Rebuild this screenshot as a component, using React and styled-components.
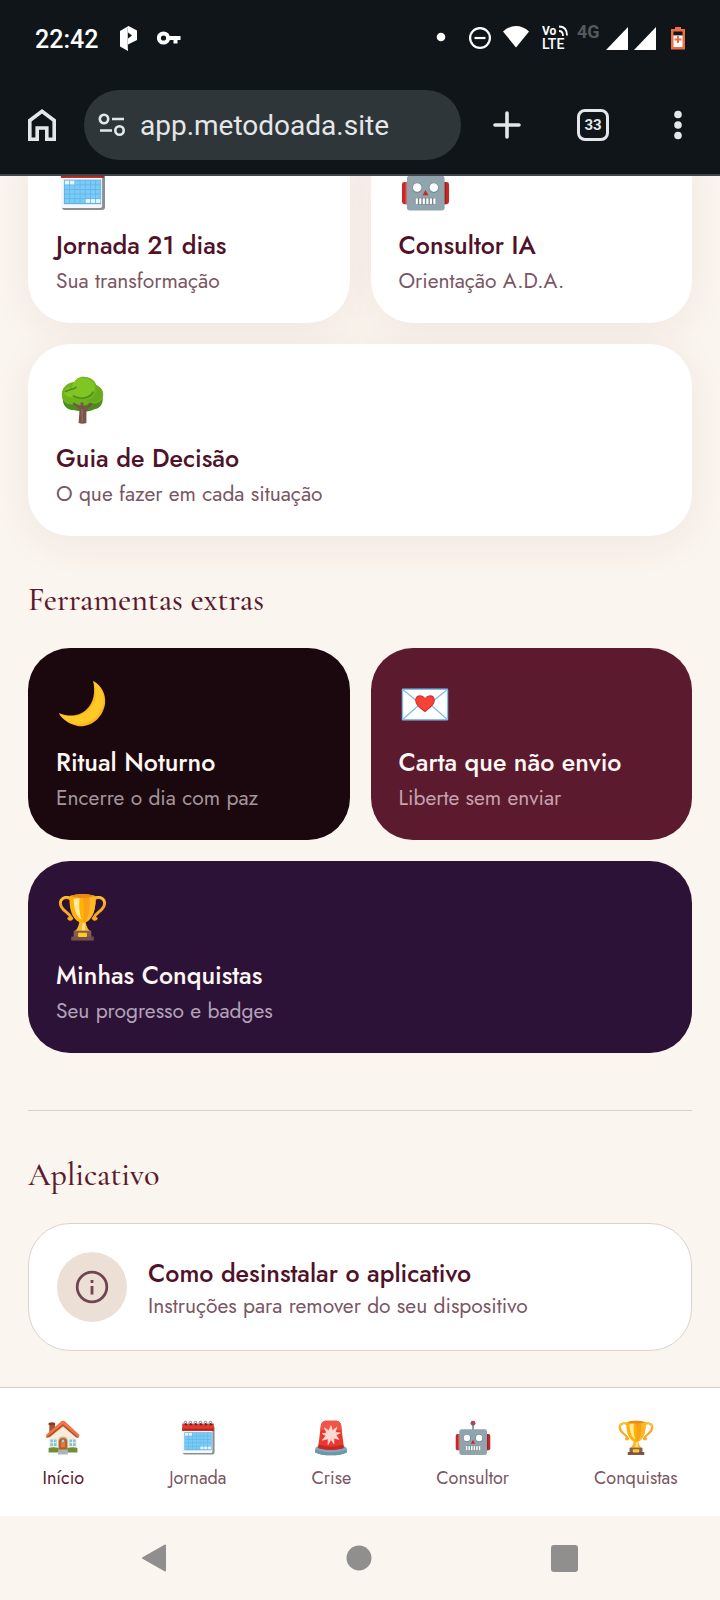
import React from "react";
import styled, { createGlobalStyle } from "styled-components";

const GlobalStyle = createGlobalStyle`
  * { box-sizing: border-box; }
  body {
    margin: 0;
    background: #faf5ee;
    font-family: Jost, Lato, "Open Sans", sans-serif;
    color: #4f1228;
  }
  button { border: 0; background: none; padding: 0; margin: 0; font: inherit; color: inherit; cursor: pointer; }
  svg { display: block; flex: none; }
`;

const Screen = styled.div`
  display: flex;
  flex-direction: column;
  min-height: 100vh;
`;

/* ---------- phone status bar and browser toolbar ---------- */

const Chrome = styled.header`
  background: #0f1519;
  border-bottom: 2px solid #414549;
  color: #e4e7e9;
  font-family: Roboto, sans-serif;
  padding-bottom: 14px;
`;

const StatusBar = styled.div`
  display: flex;
  align-items: center;
  justify-content: space-between;
  height: 90px;
  padding: 0 34px 14px 35px;
  color: #fff;
`;

const StatusGroup = styled.div`
  display: flex;
  align-items: center;
  gap: ${(p) => p.$gap}px;
`;

const Clock = styled.time`
  padding-top: 3px;
  font-size: 25px;
  line-height: 28px;
  font-weight: 500;
`;

const NetworkType = styled.span`
  width: 23px;
  padding-bottom: 12px;
  font-size: 18px;
  line-height: 18px;
  font-weight: 700;
  color: #55595c;
`;

const Toolbar = styled.div`
  display: flex;
  align-items: center;
  height: 70px;
`;

const ToolButton = styled.button`
  display: flex;
  align-items: center;
  justify-content: center;
  flex: none;
  width: ${(p) => p.$width}px;
  height: 70px;
`;

const AddressBar = styled.label`
  display: flex;
  align-items: center;
  gap: 14px;
  flex: 1;
  min-width: 0;
  height: 70px;
  margin-right: 3px;
  padding: 0 20px 0 14px;
  border-radius: 35px;
  background: #2f3639;
`;

const AddressInput = styled.input`
  flex: 1;
  min-width: 0;
  border: 0;
  padding: 2px 0 0;
  background: none;
  outline: none;
  color: #e4e7e9;
  font: 400 28px/36px Roboto, sans-serif;
`;

const TabCount = styled.span`
  display: flex;
  align-items: center;
  justify-content: center;
  width: 32px;
  height: 32px;
  border: 3px solid #e4e7e9;
  border-radius: 8px;
  font-size: 15px;
  line-height: 18px;
  font-weight: 700;
`;

/* ---------- page ---------- */

const Viewport = styled.main`
  flex: 1;
  overflow: hidden;
  padding: 0 28px 36px;
`;

const Scrolled = styled.div`
  margin-top: -45px;
`;

const Grid = styled.div`
  display: grid;
  grid-template-columns: 1fr 1fr;
  gap: 21px;
`;

const tones = {
  light: { bg: "#ffffff", title: "#4f1228", text: "#7a5663", shadow: "0 8px 40px rgba(130, 40, 55, 0.07)" },
  night: { bg: "#1a080e", title: "#fff7f4", text: "#a5959b", shadow: "none" },
  wine: { bg: "#5b1a2e", title: "#fff7f4", text: "#c6a3ae", shadow: "none" },
  purple: { bg: "#2d1238", title: "#fff7f4", text: "#b3a2b8", shadow: "none" },
};

const Card = styled.button`
  display: flex;
  flex-direction: column;
  align-items: flex-start;
  grid-column: ${(p) => (p.$wide ? "1 / -1" : "auto")};
  padding: 28px 28px 29px;
  border-radius: 42px;
  text-align: left;
  background: ${(p) => tones[p.$tone].bg};
  box-shadow: ${(p) => tones[p.$tone].shadow};
`;

const CardIcon = styled.span`
  display: flex;
  align-items: center;
  height: 56px;
  margin-bottom: 13px;
  padding-left: 2px;
`;

const CardCopy = styled.span`
  display: flex;
  flex-direction: column;
  gap: ${(p) => p.$gap}px;
`;

const CardTitle = styled.span`
  font-size: 25px;
  line-height: 34px;
  font-weight: 500;
  color: ${(p) => tones[p.$tone].title};
`;

const CardText = styled.span`
  font-size: 21px;
  line-height: 26px;
  color: ${(p) => tones[p.$tone].text};
`;

const SectionTitle = styled.h2`
  margin: 44px 0 28px;
  font: 500 32px/40px "Cormorant Garamond", "Liberation Serif", serif;
  color: #5b1a2e;
`;

const Divider = styled.hr`
  margin: 57px 0 0;
  border: 0;
  border-top: 1px solid #d8d1cc;
`;

const InfoCard = styled.button`
  display: flex;
  align-items: center;
  gap: 21px;
  width: 100%;
  padding: 28px;
  border: 1px solid #ddd3cc;
  border-radius: 42px;
  background: #fff;
  text-align: left;
`;

const InfoBadge = styled.span`
  display: flex;
  align-items: center;
  justify-content: center;
  flex: none;
  width: 70px;
  height: 70px;
  border-radius: 50%;
  background: #ecdfd5;
`;

/* ---------- bottom bars ---------- */

const BottomNav = styled.nav`
  display: flex;
  justify-content: space-around;
  padding: 28px 0 25px;
  border-top: 1px solid #dccfc8;
  background: #fff;
`;

const NavLink = styled.a`
  display: flex;
  flex-direction: column;
  align-items: center;
  gap: 9px;
  padding-top: 4px;
  font-size: 18px;
  line-height: 26px;
  text-decoration: none;
  color: ${(p) => (p.$active ? "#5b1a2e" : "#7a5663")};
`;

const SystemBar = styled.footer`
  display: flex;
  height: 84px;
  padding: 0 53px 0 51px;
`;

const SystemButton = styled.button`
  display: flex;
  align-items: center;
  justify-content: center;
  flex: 1;
`;

/* ---------- emoji drawings, all on a 50-unit square ---------- */

function Emoji({ size = 49, children }) {
  return (
    <svg width={size} height={size} viewBox="-1 -1 50 50" aria-hidden="true">
      {children}
    </svg>
  );
}

function Calendar({ size }) {
  const cells = [];
  for (let r = 0; r < 5; r++) {
    for (let c = 0; c < 7; c++) {
      const blank = (r === 0 && c < 2) || (r === 4 && c > 3);
      cells.push(
        <rect key={`${r}-${c}`} x={6 + c * 5.3} y={17 + r * 4.7} width="4.5" height="3.9" fill={blank ? "#e6f5fd" : "#7ccbf6"} />
      );
    }
  }
  return (
    <Emoji size={size}>
      <path d="M3 8h44v36a3 3 0 0 1-3 3H5a3 3 0 0 1-2-3z" fill="#8b8f93" />
      <path d="M2 8h42v35a2 2 0 0 1-2 2H4a2 2 0 0 1-2-2z" fill="#f5f7f9" />
      <rect x="5" y="16" width="38" height="25" fill="#5fb4e8" />
      {cells}
      <path d="M2 4h44v10H2z" fill="#e0392f" />
      <path d="M2 11h44v3H2z" fill="#b9251e" />
      {[6, 13, 20, 27, 34, 41].map((x) => (
        <g key={x}>
          <circle cx={x + 1} cy="5" r="1.8" fill="#8c1b17" />
          <path d={`M${x - 1} 5c-2-5 4-6 3-1`} fill="none" stroke="#8da3af" strokeWidth="1.6" />
        </g>
      ))}
    </Emoji>
  );
}

function Robot({ size }) {
  return (
    <Emoji size={size}>
      <path d="M24 4v9" stroke="#78909c" strokeWidth="2.4" />
      <circle cx="24" cy="3.4" r="3.4" fill="#a4485a" />
      <rect x="0" y="18.500" width="9" height="22.500" rx="2.500" fill="#c62828" />
      <rect x="39" y="18.500" width="9" height="22.500" rx="2.500" fill="#c62828" />
      <rect x="3.500" y="18.500" width="2" height="22.500" fill="#e05a55" />
      <rect x="43" y="18.500" width="2" height="22.500" fill="#a31c1c" />
      <rect x="5" y="12" width="38.500" height="35.500" rx="3" fill="#90a4ae" />
      <circle cx="15.500" cy="24.300" r="5.200" fill="#6f8792" />
      <circle cx="32.500" cy="24.300" r="5.200" fill="#6f8792" />
      <circle cx="15.500" cy="24" r="4.400" fill="#fff" />
      <circle cx="32.500" cy="24" r="4.400" fill="#fff" />
      <path d="M24 26.500l3 5.500h-6z" fill="#c62828" />
      <rect x="13" y="34.500" width="22" height="7" rx="3" fill="#78868d" />
      {[14, 17.600, 21.200, 24.800, 28.400, 32].map((x) => (
        <rect key={x} x={x} y="35" width="2.200" height="6" rx="0.800" fill="#fff" />
      ))}
    </Emoji>
  );
}

function Tree() {
  return (
    <Emoji>
      <path d="M4 20c-1 8 3 14 12 14 7 2 15 2 20-1 7-1 10-7 8-14z" fill="#4c8c1f" />
      <path d="M20 47l1-14-7-7 2-1 7 5 1-5h3l0 7 6-7 2 1-7 9 0 12q-4 1.500-8 0z" fill="#795548" />
      <path d="M16 5C9 5 2 11 3 19c0 8 9 11 14 8 5 3 11 3 14-1 6 3 13 0 14-6 1-7-3-10-7-12C35-2 19-3 16 5z" fill="#6fb41f" />
      <path d="M38 9c2 8-3 14-10 15 7 4 15 1 16-5 1-5-2-8-6-10z" fill="#68ab1e" />
      <path d="M13 13c0-8 6-13 13-12 8 1 12 7 10 13-2 7-10 9-17 6-5 2-13 0-14-4 1-4 3-5 6-6 0 1 1 2 2 3z" fill="#80c522" />
      <path d="M6 15l5-2 4-1 3-2M14 19c6 4 17 4 21-4" fill="none" stroke="#4c8c1f" strokeWidth="1.600" />
      <path d="M22 34V26h3v8zM25 33l7-6 1 1-7 8zM14 27l1-1 7 5v3z" fill="#795548" />
      <path d="M23.500 33l.5 13" stroke="#936a5b" strokeWidth="1.500" />
    </Emoji>
  );
}

function Moon() {
  return (
    <Emoji>
      <path d="M35 0C44 5 48 14 47 23 45 38 32 48 19 46 10 44 3 39 0 33c10 4 21 3 28-4 8-7 9-18 7-29z" fill="#fcb61c" />
      <path d="M35 0C43 6 46 13 45.500 21 44 35 31 45 18 44 9 43 3 38 0 33c10 5 23 4 31-4 8-8 8-19 4-29z" fill="#ffca28" />
    </Emoji>
  );
}

function LoveLetter() {
  return (
    <Emoji>
      <rect x="0.500" y="8.500" width="46" height="31" rx="0.500" fill="#fff" stroke="#82bdea" strokeWidth="1.400" />
      <path d="M1 39l17-15M46 39L29 24M1 9l20 16q2.500 2 5 0L46 9" fill="none" stroke="#82bdea" strokeWidth="1.300" />
      <path d="M23.500 32C18 28 13 24 13.500 19c.5-5 7-6 10-1.500C27 13 33 14 33.500 19c.5 5-5 9-10 13z" fill="#d32f2f" />
      <path d="M23.500 30.500C18 26.500 14 23 14.300 19c.7-4 6.700-5 9.200-.500 2.500-4.500 8-3.500 9 .5.500 4-4 7.500-9 11.500z" fill="#f44336" />
    </Emoji>
  );
}

function Trophy({ size }) {
  return (
    <Emoji size={size}>
      <path d="M12 5C7 2 1 4 1.500 10 2 17 10 18 13 25c-1 1-2 1-3 0M36 5c5-3 11-1 10.500 5C46 17 38 18 35 25c1 1 2 1 3 0" fill="none" stroke="#f9a825" strokeWidth="3" strokeLinecap="round" />
      <path d="M12 4C7 1 2 4 2 9M36 4c5-3 10 0 10 5" fill="none" stroke="#ffca28" strokeWidth="1.400" />
      <path d="M21 27h6l1 5q1 4 4 6H16q3-2 4-6z" fill="#f9b62b" />
      <path d="M24 28h2l1 9h-4z" fill="#ffe082" />
      <path d="M11 2q13-4 26 0c1 9-1 19-6 24-3 4-11 4-14 0-5-5-7-15-6-24z" fill="#ffb300" />
      <path d="M24 1q7 0 13 1c1 9-1 19-6 24-1.500 2-4 3-7 3 3-7 1-18 0-28z" fill="#f9a01b" />
      <path d="M31 2q3 0 6 0c1 9-1 19-6 24-1 1-2 2-4 2.500 4-6 5-17 4-26.500z" fill="#ffb726" />
      <path d="M15 5q4-1 6-1c-1 9 0 16 2 22-6-3-8-13-8-21z" fill="#ffe9a0" />
      <path d="M11 2q13-4 26 0-13 4-26 0z" fill="#e98b15" />
      <path d="M15 37.500h18v7H15z" fill="#86604f" />
      <path d="M12.500 43.500h23v4h-23z" fill="#74504a" />
      <rect x="19.500" y="39.500" width="9" height="4.500" rx="0.800" fill="#ffca28" />
    </Emoji>
  );
}

function House({ size }) {
  return (
    <Emoji size={size}>
      <path d="M5 4q4-2 8 0v14H5z" fill="#a9512f" />
      <path d="M4 3q5-2 9 0v3H4z" fill="#7b3f2a" />
      <path d="M5 20L24 5l19 15v23H5z" fill="#f5eddc" />
      <path d="M5 20L24 5l19 15v4L24 9 5 24z" fill="#d9cdb8" />
      <path d="M24 0q2 0 4 2l19 18-1.500 4q-2 0-4-2L24 7 6 22q-3 2-6 1l1-4L20 2q2-2 4-2z" fill="#ed7546" />
      <path d="M24 5l21 18q-2 1-4-1L24 7.500 6 22q-3 2-5 1z" fill="#b84a24" />
      <path d="M17 41V28q1-6 7-6t7 6v13z" fill="#c9b696" />
      <path d="M18.500 41V28q1-4 5.500-4t5.500 4v13z" fill="#b85b2b" />
      <path d="M21 29h6v8h-6z" fill="#db7a42" />
      <circle cx="24" cy="28" r="2" fill="#9fd4e6" />
      <path d="M6.500 26h8.500v9H6.500zM33 26h8.500v9H33z" fill="#7fc4dc" />
      <path d="M6.500 30.500H15M10.700 26v9M33 30.500h8.500M37.200 26v9" stroke="#fff" strokeWidth="1.100" />
      <path d="M4 38q6-2 14 0v6H4zM30 38q8-2 14 0v6H30z" fill="#6f8f35" />
      <path d="M18 40h12l1 7H17z" fill="#aab4ba" />
    </Emoji>
  );
}

function Siren({ size }) {
  return (
    <Emoji size={size}>
      <path d="M2 40q0-4 5-5h34q5 1 5 5v4q-8 4-22 4T2 44z" fill="#82a8b8" />
      <path d="M2 40q10 4 22 4t22-4v4q-8 4-22 4T2 44z" fill="#6d96a8" />
      <path d="M10 6q1-5 6-6h16q5 1 6 6l4 32q-6 2.500-18 2.500T6 38z" fill="#e8382f" />
      <path d="M10 6q1-5 6-6h16q5 1 6 6l1 7H9z" fill="#f05545" />
      <path d="M7 33q16 6 34 0l.7 5q-6 2.500-18 2.500T6 38z" fill="#c62828" />
      <path d="M24 7l2 7 6-5-2 7 7 1-6 3 4 6-7-2 0 8-4-6-4 7 0-8-8 2 5-6-5-3 6-1-3-7 6 4z" fill="#ffd9d2" stroke="#ffd9d2" strokeLinejoin="round" />
    </Emoji>
  );
}

/* ---------- line icons ---------- */

const Key = () => (
  <svg width="24" height="14" viewBox="0 0 24 14" fill="none" aria-hidden="true">
    <circle cx="6.500" cy="7" r="4.600" stroke="#fff" strokeWidth="4" />
    <path d="M10 7h13.500M18.500 7v5.500" stroke="#fff" strokeWidth="4" />
  </svg>
);

const PMark = () => (
  <svg width="19" height="25" viewBox="-2 0 19 25" aria-hidden="true">
    <path d="M0 5L8.500 0l8.500 4.500V14l-9 4.500V25L0 20.500z" fill="#fff" />
    <path d="M8 6.500l4 3-4 3z" fill="#0f1519" />
    <path d="M7.500 2v21" stroke="#b9bdc0" strokeWidth="0.800" />
  </svg>
);

const Signal = () => (
  <svg width="22" height="23" viewBox="0 0 22 23" aria-hidden="true">
    <path d="M22 0v23H0z" fill="#fff" />
  </svg>
);

const VoLte = () => (
  <svg width="29" height="34" viewBox="0 -4 29 34" fill="none" aria-hidden="true">
    <text x="0" y="10" fill="#fff" fontFamily="Roboto, sans-serif" fontWeight="700" fontSize="12">Vo</text>
    <text x="0" y="24" fill="#fff" fontFamily="Roboto, sans-serif" fontWeight="500" fontSize="14">LTE</text>
    <path d="M17 1.500q8 0 8 9M17 6q4 0 4 5" stroke="#fff" strokeWidth="1.800" />
  </svg>
);

const launchCards = [
  { title: "Jornada 21 dias", text: "Sua transformação", icon: Calendar, tone: "light" },
  { title: "Consultor IA", text: "Orientação A.D.A.", icon: Robot, tone: "light" },
  { title: "Guia de Decisão", text: "O que fazer em cada situação", icon: Tree, tone: "light", wide: true },
];

const extraCards = [
  { title: "Ritual Noturno", text: "Encerre o dia com paz", icon: Moon, tone: "night" },
  { title: "Carta que não envio", text: "Liberte sem enviar", icon: LoveLetter, tone: "wine" },
  { title: "Minhas Conquistas", text: "Seu progresso e badges", icon: Trophy, tone: "purple", wide: true },
];

const navItems = [
  { label: "Início", icon: House, active: true },
  { label: "Jornada", icon: Calendar },
  { label: "Crise", icon: Siren },
  { label: "Consultor", icon: Robot },
  { label: "Conquistas", icon: Trophy },
];

function CardGrid({ cards }) {
  return (
    <Grid>
      {cards.map(({ title, text, icon: Icon, tone, wide }) => (
        <Card key={title} type="button" $tone={tone} $wide={wide}>
          <CardIcon><Icon /></CardIcon>
          <CardCopy $gap={6}>
            <CardTitle $tone={tone}>{title}</CardTitle>
            <CardText $tone={tone}>{text}</CardText>
          </CardCopy>
        </Card>
      ))}
    </Grid>
  );
}

export default function App() {
  return (
    <Screen>
      <GlobalStyle />
      <Chrome>
        <StatusBar>
          <StatusGroup $gap={20}>
            <Clock>22:42</Clock>
            <PMark />
            <Key />
          </StatusGroup>
          <StatusGroup $gap={6}>
            <svg width="27" height="24" viewBox="0 0 27 24" aria-hidden="true">
              <circle cx="5" cy="11" r="4.300" fill="#fff" />
            </svg>
            <svg width="28" height="24" viewBox="0 0 28 24" fill="none" stroke="#fff" strokeWidth="2.200" aria-hidden="true">
              <circle cx="11" cy="12" r="9.900" />
              <path d="M5.500 12h11" />
            </svg>
            <svg width="33" height="24" viewBox="0 0 33 24" aria-hidden="true">
              <path d="M0 5.500Q6 0 13 0t13 5.500L13 21.500z" fill="#fff" />
            </svg>
            <VoLte />
            <NetworkType>4G</NetworkType>
            <Signal />
            <Signal />
            <svg width="24" height="24" viewBox="0 0 24 24" aria-hidden="true">
              <path d="M13 1h6v2h4v20.500H9V3h4z" fill="#ee6c43" />
              <path d="M11.500 5.500h9v4h-9z" fill="#0f1519" />
              <path d="M11.500 9.500h9v11.500h-9z" fill="#fff" />
              <path d="M12.500 13.500h7M16 10v7" stroke="#ee6c43" strokeWidth="2" />
            </svg>
          </StatusGroup>
        </StatusBar>
        <Toolbar>
          <ToolButton type="button" aria-label="Página inicial" $width={84}>
            <svg width="28" height="32" viewBox="0 0 28 32" fill="none" stroke="#e4e7e9" strokeWidth="3.600">
              <path d="M1.800 11.500L14 2.300l12.200 9.200v18.700h-7.400V19H9.200v11.200H1.800z" />
            </svg>
          </ToolButton>
          <AddressBar>
            <svg width="28" height="24" viewBox="0 0 28 24" fill="none" stroke="#e4e7e9" strokeWidth="2.600" aria-hidden="true">
              <circle cx="6" cy="6" r="4.200" />
              <circle cx="21.500" cy="17.500" r="4.200" />
              <path d="M14 6h12M2 17.500h12" />
            </svg>
            <AddressInput aria-label="Endereço" defaultValue="app.metodoada.site" />
          </AddressBar>
          <ToolButton type="button" aria-label="Nova guia" $width={86}>
            <svg width="28" height="28" viewBox="0 0 28 28" stroke="#e4e7e9" strokeWidth="3.600" strokeLinecap="round">
              <path d="M14 2v24M2 14h24" />
            </svg>
          </ToolButton>
          <ToolButton type="button" aria-label="Guias abertas" $width={86}>
            <TabCount>33</TabCount>
          </ToolButton>
          <ToolButton type="button" aria-label="Mais opções" $width={84}>
            <svg width="8" height="30" viewBox="0 0 8 30" fill="#e4e7e9">
              <circle cx="4" cy="4.500" r="3.800" />
              <circle cx="4" cy="15" r="3.800" />
              <circle cx="4" cy="25.500" r="3.800" />
            </svg>
          </ToolButton>
        </Toolbar>
      </Chrome>

      <Viewport>
        <Scrolled>
          <CardGrid cards={launchCards} />
          <SectionTitle>Ferramentas extras</SectionTitle>
          <CardGrid cards={extraCards} />
          <Divider />
          <SectionTitle>Aplicativo</SectionTitle>
          <InfoCard type="button">
            <InfoBadge>
              <svg width="34" height="34" viewBox="0 0 34 34" fill="none" stroke="#714453" strokeWidth="2.800" aria-hidden="true">
                <circle cx="17" cy="17" r="14.800" />
                <path d="M17 16v8.500M17 10v3" />
              </svg>
            </InfoBadge>
            <CardCopy $gap={3}>
              <CardTitle $tone="light">Como desinstalar o aplicativo</CardTitle>
              <CardText $tone="light">Instruções para remover do seu dispositivo</CardText>
            </CardCopy>
          </InfoCard>
        </Scrolled>
      </Viewport>

      <BottomNav>
        {navItems.map(({ label, icon: Icon, active }) => (
          <NavLink key={label} href="#" $active={active}>
            <Icon size={36} />
            {label}
          </NavLink>
        ))}
      </BottomNav>
      <SystemBar>
        <SystemButton type="button" aria-label="Voltar">
          <svg width="26" height="28" viewBox="0 0 26 28">
            <path d="M24 1.500v25L2 14z" fill="#918f8d" stroke="#918f8d" strokeWidth="2" strokeLinejoin="round" />
          </svg>
        </SystemButton>
        <SystemButton type="button" aria-label="Início">
          <svg width="26" height="26" viewBox="0 0 26 26">
            <circle cx="13" cy="13" r="12.500" fill="#918f8d" />
          </svg>
        </SystemButton>
        <SystemButton type="button" aria-label="Recentes">
          <svg width="27" height="27" viewBox="0 0 27 27">
            <rect width="27" height="27" rx="3" fill="#918f8d" />
          </svg>
        </SystemButton>
      </SystemBar>
    </Screen>
  );
}
